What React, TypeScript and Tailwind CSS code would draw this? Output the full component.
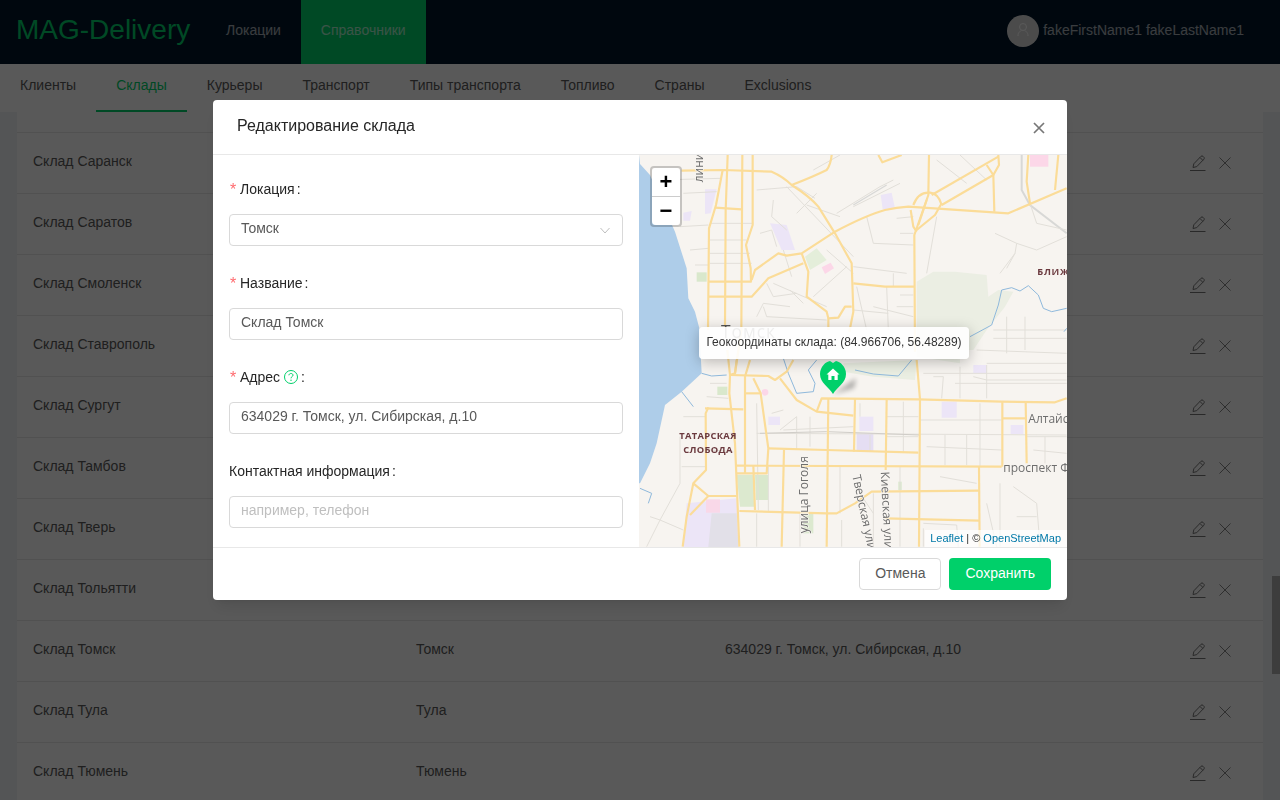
import React from "react";

const tabs = ["Клиенты", "Склады", "Курьеры", "Транспорт", "Типы транспорта", "Топливо", "Страны", "Exclusions"];

const rows = [
  { name: "Склад Саранск", city: "Саранск", address: "" },
  { name: "Склад Саратов", city: "Саратов", address: "" },
  { name: "Склад Смоленск", city: "Смоленск", address: "" },
  { name: "Склад Ставрополь", city: "Ставрополь", address: "" },
  { name: "Склад Сургут", city: "Сургут", address: "" },
  { name: "Склад Тамбов", city: "Тамбов", address: "" },
  { name: "Склад Тверь", city: "Тверь", address: "" },
  { name: "Склад Тольятти", city: "Тольятти", address: "" },
  { name: "Склад Томск", city: "Томск", address: "634029 г. Томск, ул. Сибирская, д.10" },
  { name: "Склад Тула", city: "Тула", address: "" },
  { name: "Склад Тюмень", city: "Тюмень", address: "" },
];

// map coordinates are in 3x px from the map's corner (640,150)
const majorRoads = [
  "M125 62 L250 60 L395 65 Q430 80 455 105 Q510 140 535 170 L585 250 L635 340 L640 485 L628 545",
  "M575 15 Q572 45 560 60 Q520 80 455 105",
  "M263 15 L257 180 L255 530",
  "M307 15 L304 540 L285 670",
  "M338 15 L338 225 L318 285 L332 355 L333 395",
  "M248 60 L228 165 L207 235 L204 540",
  "M225 173 L305 178",
  "M207 395 L335 395",
  "M207 440 L335 440 L385 385 L490 340",
  "M335 390 L345 360 L415 310 L440 317 L485 310 L585 245 Q680 195 735 180 Q770 172 805 170 L1105 190 L1280 115",
  "M485 310 L505 365 L500 440 L560 485 L565 505 L595 503 L615 470 L635 470",
  "M565 505 L565 540",
  "M825 605 L823 255 L865 135 L867 15",
  "M812 180 L820 230 L830 245",
  "M830 240 L885 195 L905 160",
  "M835 225 L860 150",
  "M875 135 L1075 20",
  "M905 165 L1060 75 L1077 45 L1075 15",
  "M1040 45 L1060 75 L1063 185",
  "M820 165 Q835 125 870 128 Q895 130 905 165",
  "M1165 15 L1160 95 L1170 160",
  "M1255 15 L1245 120",
  "M715 15 L727 37 L785 15",
  "M640 400 L735 410 L823 410",
  "M262 600 L270 675 L268 730 L285 880 L298 1190",
  "M290 630 L285 670 L270 675",
  "M330 630 L315 680 L315 970",
  "M270 675 L385 678 L405 690 L440 665 L460 630",
  "M340 685 L362 730 L385 895 L380 970 L290 970",
  "M315 730 L360 730",
  "M195 775 L310 778",
  "M205 772 L197 790 L198 960 L160 1000 L140 1100 L128 1190",
  "M160 1000 L205 1038 L290 1038",
  "M205 1038 L150 1095",
  "M290 947 L1085 950",
  "M385 895 L560 900 L835 908",
  "M420 685 L470 750 L530 785 L640 797",
  "M530 785 L545 745 L835 748 L1085 755 L1245 757 L1280 745",
  "M565 745 L560 1190",
  "M645 745 L642 905",
  "M432 900 L425 1190",
  "M340 947 L345 1080",
  "M298 1083 L560 1090 L590 1090 L645 1060 L695 1025 L1017 1022",
  "M740 748 L737 960",
  "M830 630 L840 748 L837 1190",
  "M1017 950 L1019 1190",
  "M1087 755 L1087 950",
  "M1157 755 L1160 940",
  "M1087 805 L1160 805",
  "M737 1105 L1017 1112",
];

const minorRoads = [
  "M60 90 L240 85", "M130 130 L230 125", "M120 230 L205 225", "M150 300 L205 295", "M165 345 L205 345",
  "M210 220 L340 220", "M210 270 L320 270", "M210 310 L330 310", "M210 340 L335 340",
  "M350 120 L470 110 L525 145", "M400 150 L395 200 L440 240", "M360 250 L395 240 L410 290", "M430 300 L455 380",
  "M440 110 L640 320", "M590 190 L720 110 L760 90", "M500 165 L600 200", "M470 190 L530 130", "M640 170 L780 100",
  "M560 300 L640 370", "M400 400 L560 470", "M370 470 L380 500 L560 510", "M450 420 L490 460", "M520 440 L620 350",
  "M640 350 L800 370", "M760 370 L760 410", "M740 410 L745 540", "M780 435 L820 435", "M770 470 L820 470", "M700 470 L820 500",
  "M650 410 L680 540", "M640 480 L745 490", "M380 400 L400 440 L470 430", "M350 500 L370 460 L450 470",
  "M890 200 L860 370", "M1065 250 L1130 280 L1125 310 L1100 355", "M1125 310 L1080 370",
  "M1130 280 L1190 300 L1280 260", "M1170 160 L1190 220 L1280 240", "M780 250 L820 250", "M770 205 L820 200",
  "M680 200 L700 280 L820 285", "M520 60 L600 15", "M890 30 L980 100", "M960 15 L1040 90",
  "M1100 500 L1100 610", "M1155 500 L1155 600", "M1060 540 L1280 540", "M1060 565 L1280 565", "M1010 600 L1280 610",
  "M1040 640 L1280 640", "M1000 680 L1040 690 L1280 690",
  "M850 670 L1280 670", "M945 700 L1280 700", "M1040 645 L1040 745", "M960 650 L960 745", "M880 680 L910 680 L905 745",
  "M350 850 L1280 855", "M430 840 L640 830", "M840 810 L1085 810", "M860 890 L1085 900", "M1020 760 L1020 950",
  "M915 855 L915 945", "M980 855 L980 945", "M1160 860 L1280 860", "M1180 900 L1280 910", "M1215 860 L1215 940",
  "M740 800 L835 800", "M690 855 L690 905", "M790 755 L790 905", "M660 760 L660 800", "M740 860 L835 860",
  "M350 760 L355 1080", "M395 790 L430 780", "M420 840 L470 800", "M470 800 L470 900", "M510 800 L510 890",
  "M125 950 L195 950", "M120 860 L120 1000 L60 1110", "M60 1110 L130 1140", "M30 1100 L60 1110 L20 1190",
  "M600 950 L600 1090", "M640 1000 L700 1090", "M700 1190 L700 1030", "M780 950 L780 1190", "M900 980 L1010 1000",
  "M1080 1000 L1080 1190", "M1120 1010 L1190 1060 L1200 1190", "M1040 1060 L1070 1190", "M1130 1100 L1190 1100",
  "M850 1120 L950 1125 L955 1190", "M850 1135 L850 1190", "M350 1090 L350 1190", "M480 1090 L480 1190", "M605 1110 L605 1190",
  "M210 700 L260 700", "M200 740 L265 745", "M130 800 L195 800", "M210 850 L280 850", "M210 900 L280 905", "M385 950 L385 1085",
];

function MapLayer() {
  return (
    <svg viewBox="-3 15 1284 1176" className="absolute inset-0 w-full h-full bg-[#f7f4f0]">
      {/* water */}
      <path
        d="M-3 15 L0 42 L30 75 L105 245 L140 355 L145 445 L165 485 L178 535 L185 670 L125 725 L75 765 L50 880 L30 940 L0 1000 L-3 1000 Z"
        fill="#aecde9"
      />
      {/* park */}
      <path
        d="M830 395 L880 365 L945 365 L1040 375 L1045 440 L1075 420 L1120 425 L1095 470 L1040 540 L1000 600 L960 600 L960 640 L830 620 Z"
        fill="#ebeee3"
      />
      <path d="M610 640 L830 630 L825 690 L700 680 L610 665 Z" fill="#eaeee2" />
      <path d="M290 975 L340 975 L345 1070 L300 1070 Z" fill="#dce9cf" />
      <path d="M345 975 L385 975 L385 1050 L348 1050 Z" fill="#d9e8cc" />
      <path d="M490 1090 L520 1090 L520 1150 L490 1150 Z" fill="#dce9cf" />
      <path d="M232 710 L262 710 L262 735 L232 735 Z" fill="#d9e8cc" />
      <path d="M170 367 L200 367 L200 395 L170 395 Z" fill="#d9e8cc" />
      <path d="M495 320 L530 295 L560 330 L510 360 Z" fill="#e4eeda" />
      <path d="M775 995 L785 995 L785 1020 L775 1020 Z" fill="#d9e8cc" />
      {/* purple and pink blocks */}
      <path d="M390 220 L440 225 L465 300 L425 300 Z" fill="#ece5f7" />
      <path d="M722 135 L755 128 L765 175 L728 178 Z" fill="#ece5f7" />
      <path d="M195 118 L230 118 L212 190 L195 192 Z" fill="#ece5f7" />
      <path d="M130 188 L155 183 L150 212 L130 212 Z" fill="#ece5f7" />
      <path d="M905 755 L950 755 L950 803 L905 803 Z" fill="#ece5f7" />
      <path d="M650 850 L700 850 L700 905 L650 905 Z" fill="#e5def3" />
      <path d="M658 800 L700 800 L700 843 L658 843 Z" fill="#ece5f7" />
      <path d="M1000 645 L1040 645 L1040 670 L1000 670 Z" fill="#ece5f7" />
      <path d="M1112 825 L1150 825 L1150 852 L1112 852 Z" fill="#ece5f7" />
      <path d="M385 800 L420 800 L420 825 L385 825 Z" fill="#ece5f7" />
      <path d="M140 1060 L290 1045 L296 1191 L130 1191 Z" fill="#ece5f7" />
      <path d="M215 1090 L290 1090 L295 1191 L205 1191 Z" fill="#e2e0e8" />
      <path d="M198 1048 L240 1048 L240 1088 L198 1088 Z" fill="#f9d8e8" />
      <path d="M1170 15 L1225 15 L1225 50 L1170 50 Z" fill="#fcd7e8" />
      <path d="M545 352 L572 338 L582 355 L555 372 Z" fill="#fcd7e8" />
      <circle cx="375" cy="727" r="10" fill="#fcd7e8" />
      {/* railway */}
      <path d="M1145 15 L1145 120 L1170 165 L1280 250" fill="none" stroke="#d8d8d6" strokeWidth="6" />
      <path d="M640 165 L740 105" fill="none" stroke="#d8d8d6" strokeWidth="4" />
      {/* small streets */}
      {minorRoads.map((d, i) => (
        <path key={i} d={d} fill="none" stroke="#e2dfd9" strokeWidth="3" />
      ))}
      <path d="M360 850 L560 845 L840 855" fill="none" stroke="#d0cdc8" strokeWidth="3" />
      {/* rivers */}
      <g fill="none" stroke="#8fb9dc" strokeWidth="3">
        <path d="M1280 475 L1235 485 L1210 475 L1195 435 L1165 407 L1140 423 L1115 413 L1085 420 L1075 465 L1055 525 L990 560" />
        <path d="M815 630 L775 678 L700 672 L645 660" />
        <path d="M430 625 L445 670 L470 730 L520 725 L525 700 L505 660 L530 630" />
        <path d="M185 670 L215 678 L260 675" />
        <path d="M125 725 L160 770" />
        <path d="M0 1015 L35 1030 L25 1060" />
        <path d="M1280 535 L1272 545" />
      </g>
      {/* main streets */}
      {majorRoads.map((d, i) => (
        <path key={i} d={d} fill="none" stroke="#fbdc98" strokeWidth="6.5" strokeLinejoin="round" />
      ))}
      {/* labels */}
      <g fontFamily="'Open Sans', sans-serif">
        <text x="243" y="565" fontSize="52" fill="#555" letterSpacing="3">
          Томск
        </text>
        <text x="1192" y="375" fontSize="28" fontWeight="700" fill="#6b3a3f" letterSpacing="2">
          БЛИЖ
        </text>
        <text x="204" y="868" fontSize="28" fontWeight="700" fill="#6b3a3f" textAnchor="middle" letterSpacing="1">
          ТАТАРСКАЯ
        </text>
        <text x="204" y="909" fontSize="28" fontWeight="700" fill="#6b3a3f" textAnchor="middle" letterSpacing="1">
          СЛОБОДА
        </text>
        <g fontSize="36" fill="#6e6e6e" stroke="#f7f4f0" strokeWidth="4" paintOrder="stroke">
          <text transform="translate(505 1150) rotate(-90)">улица Гоголя</text>
          <text transform="translate(637 977) rotate(78)">Тверская ули</text>
          <text transform="translate(722 965) rotate(87)">Киевская ули</text>
          <text x="1165" y="820">Алтайс</text>
          <text x="1090" y="965">проспект Ф</text>
          <text transform="translate(188 97) rotate(-90)">линия</text>
        </g>
      </g>
    </svg>
  );
}

function EditIcon() {
  return (
    <svg width="18" height="18" viewBox="0 0 18 18" fill="none" stroke="#777" strokeWidth="1">
      <path d="M1 16.5 H16.5" />
      <path d="M4 13.5 L4.8 9.8 L12 2.3 Q13 1.5 14 2.3 L15 3.3 Q15.6 4.3 14.9 5.2 L7.8 12.6 Z" />
      <path d="M11 3.5 L13.8 6.3" />
    </svg>
  );
}

function RowCross() {
  return (
    <svg width="14" height="14" viewBox="0 0 14 14" fill="none" stroke="#888" strokeWidth="1">
      <path d="M1.5 1.5 L12.5 12.5 M12.5 1.5 L1.5 12.5" />
    </svg>
  );
}

function CloseIcon() {
  return (
    <svg width="14" height="14" viewBox="0 0 14 14" fill="none" stroke="#777" strokeWidth="1.7">
      <path d="M2 2 L12 12 M12 2 L2 12" />
    </svg>
  );
}

function FormLabel({ text, required, hint }: { text: string; required?: boolean; hint?: boolean }) {
  return (
    <div className="h-10 flex items-center text-sm text-[#262626]">
      {required && <span className="text-[#ff6b6f] text-base w-[10px] ml-[1px] mt-[2px] leading-none">*</span>}
      <span>{text}</span>
      {hint && (
        <svg width="16" height="16" viewBox="0 0 16 16" fill="none" className="ml-[3px]">
          <circle cx="8" cy="8" r="6.5" stroke="#00d06a" />
          <path d="M5.9 6.3 C6 3.9 10 3.9 10 6.2 C10 7.6 8 7.6 8 9.3" stroke="#00d06a" />
          <circle cx="8" cy="11.2" r="0.7" fill="#00d06a" />
        </svg>
      )}
      <span className="ml-[2px]">:</span>
    </div>
  );
}

function TextField({ value, placeholder }: { value?: string; placeholder?: string }) {
  return (
    <input
      readOnly
      value={value}
      placeholder={placeholder}
      className="block w-full h-8 px-[11px] pb-1 text-sm text-[#595959] bg-white border border-[#d9d9d9] rounded placeholder:text-[#bfbfbf] outline-none"
    />
  );
}

export default function App() {
  return (
    <div className="relative h-screen overflow-hidden bg-[#f0f2f5] font-['Liberation_Sans',Arial,sans-serif] text-sm text-[#595959]">
      <header className="h-16 bg-[#001529] flex items-center">
        <div className="w-[206px] pl-4 text-[28px] text-[#00d06a] leading-none -mt-[4px]">MAG-Delivery</div>
        <nav className="flex h-full text-white/65 leading-[60px]">
          <a className="px-5">Локации</a>
          <a className="px-5 bg-[#00d06a]">Справочники</a>
        </nav>
        <div className="ml-auto pr-9 flex items-center text-white/65">
          <div className="w-8 h-8 -mt-[2px] rounded-full bg-[#d8d8d8] flex justify-center pt-[8px]">
            <svg width="12" height="13" viewBox="0 0 12 13" fill="none" stroke="#fff" strokeWidth="1">
              <circle cx="6" cy="4" r="3.5" />
              <path d="M1 13 C1 9 3 8.5 4.5 7.5 M11 13 C11 9 9 8.5 7.5 7.5" />
            </svg>
          </div>
          <span className="ml-1 -mt-[4px]">fakeFirstName1 fakeLastName1</span>
        </div>
      </header>

      <div className="h-12 bg-white flex">
        {tabs.map((tab) => (
          <a
            key={tab}
            className={
              tab === "Склады"
                ? "px-5 leading-[42px] text-[#00d06a] border-b-2 border-[#00d06a]"
                : "px-5 leading-[42px] text-[#595959]"
            }
          >
            {tab}
          </a>
        ))}
      </div>

      <div className="mx-[17px] bg-white">
        <div className="h-[21px] border-b border-[#e8e8e8]" />
        {rows.map((row) => (
          <div key={row.name} className="h-[61px] flex items-center border-b border-[#e8e8e8] pl-4 pr-[31px]">
            <span className="w-[383px] -mt-[5px]">{row.name}</span>
            <span className="w-[309px] -mt-[5px]">{row.city}</span>
            <span className="-mt-[5px]">{row.address}</span>
            <span className="ml-auto flex items-center gap-[11px]">
              <EditIcon />
              <RowCross />
            </span>
          </div>
        ))}
      </div>

      <div className="absolute right-0 top-[576px] w-2 h-[98px] bg-[#b0b0b0]" />

      <div className="fixed inset-0 bg-black/65 flex justify-center pt-[100px]">
        <div className="w-[854px] h-[500px] bg-white rounded flex flex-col shadow-lg">
          <div className="h-[55px] shrink-0 border-b border-[#e8e8e8] flex items-center justify-between pl-6 pr-[21px]">
            <span className="text-base text-[#262626] -mt-[2px]">Редактирование склада</span>
            <span className="mt-[1px]">
              <CloseIcon />
            </span>
          </div>

          <div className="flex flex-1 min-h-0">
            <form className="w-[426px] shrink-0 px-4 pt-[14px] overflow-hidden">
              <FormLabel text="Локация" required />
              <div className="relative mt-[5px] mb-[17px]">
                <TextField value="Томск" />
                <svg
                  width="12"
                  height="12"
                  viewBox="0 0 12 12"
                  fill="none"
                  stroke="#bfbfbf"
                  className="absolute right-3 top-[10px]"
                >
                  <path d="M1.5 4 L6 9 L10.5 4" />
                </svg>
              </div>
              <FormLabel text="Название" required />
              <div className="mt-[5px] mb-[17px]">
                <TextField value="Склад Томск" />
              </div>
              <FormLabel text="Адрес" required hint />
              <div className="mt-[5px] mb-[17px]">
                <TextField value="634029 г. Томск, ул. Сибирская, д.10" />
              </div>
              <FormLabel text="Контактная информация" />
              <div className="mt-[5px]">
                <TextField placeholder="например, телефон" />
              </div>
            </form>

            <div className="relative flex-1 overflow-hidden">
              <MapLayer />

              <div className="absolute left-[11px] top-[11px] w-[32px] rounded border-2 border-black/20 bg-clip-padding">
                <div className="h-[29px] bg-white rounded-t-sm border-b border-[#ccc] flex items-center justify-center text-[22px] font-bold text-black leading-none">
                  +
                </div>
                <div className="h-[28px] bg-white rounded-b-sm flex items-center justify-center text-[22px] font-bold text-black leading-none">
                  −
                </div>
              </div>

              <div className="absolute left-[60px] top-[172px] w-[270px] h-[32px] rounded bg-white/90 shadow-[0_3px_14px_rgba(0,0,0,0.25)] flex items-center justify-center text-xs text-[#333] whitespace-nowrap pb-[2px]">
                Геокоординаты склада: (84.966706, 56.48289)
              </div>

              <svg width="44" height="36" viewBox="0 0 44 36" className="absolute left-[180px] top-[206px]">
                <defs>
                  <filter id="pin-shadow" x="-30%" y="-30%" width="160%" height="160%">
                    <feGaussianBlur stdDeviation="2.5" />
                  </filter>
                </defs>
                <path d="M14 33 L26 25 L37 17 L35 27 Z" fill="#000" opacity="0.3" filter="url(#pin-shadow)" />
                <path d="M14 33 C10 26 1 22 1 13 C1 5.5 7 0.5 11 0 L14 2 L17 0 C21 0.5 27 5.5 27 13 C27 22 18 26 14 33 Z" fill="#00d06a" />
                <path d="M14 7.5 L20.5 13.5 H18.7 V19 H15.5 V15 H12.5 V19 H9.3 V13.5 H7.5 Z" fill="#fff" />
              </svg>

              <div className="absolute right-0 bottom-0 h-[17px] pl-[5px] pr-[6px] bg-white/70 text-[11px] text-[#333] leading-[17px] whitespace-nowrap">
                <a className="text-[#0078a8]">Leaflet</a> | © <a className="text-[#0078a8]">OpenStreetMap</a>
              </div>
            </div>
          </div>

          <div className="h-[53px] shrink-0 border-t border-[#e8e8e8] flex items-center justify-end gap-2 px-4">
            <button className="h-8 px-[15px] border border-[#d9d9d9] rounded bg-white text-[#595959] pb-[2px]">Отмена</button>
            <button className="h-8 px-4 rounded bg-[#00d06a] text-white pb-[2px]">Сохранить</button>
          </div>
        </div>
      </div>
    </div>
  );
}
